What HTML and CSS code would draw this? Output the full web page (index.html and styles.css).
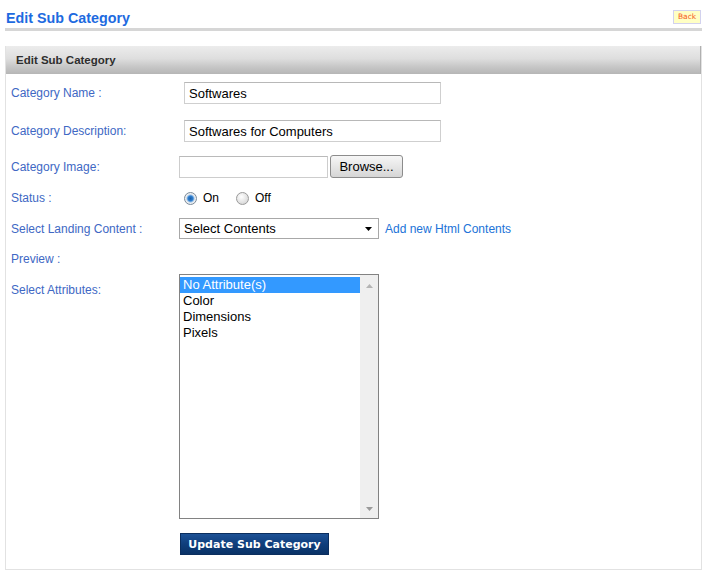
FILE: index.html
```html
<!DOCTYPE html>
<html>
<head>
<meta charset="utf-8">
<link rel="stylesheet" href="styles.css">
</head>
<body>
<div class="page">
  <div class="topbar">
    <h1 class="title">Edit Sub Category</h1>
    <a class="back" href="#">Back</a>
  </div>
  <div class="rule"></div>
  <div class="panel">
    <div class="panel-head">Edit Sub Category</div>
    <div class="form">
      <div class="row row-name">
        <label class="lbl">Category Name :</label>
        <div class="field"><input class="text" type="text" value="Softwares"></div>
      </div>
      <div class="row row-desc">
        <label class="lbl">Category Description:</label>
        <div class="field"><input class="text" type="text" value="Softwares for Computers"></div>
      </div>
      <div class="row row-image">
        <label class="lbl">Category Image:</label>
        <div class="field file">
          <div class="file-box"></div>
          <button class="browse" type="button">Browse...</button>
        </div>
      </div>
      <div class="row row-status">
        <label class="lbl">Status :</label>
        <div class="field radios">
          <span class="radio checked"></span><span class="rtext rtext-on">On</span>
          <span class="radio off"></span><span class="rtext">Off</span>
        </div>
      </div>
      <div class="row row-landing">
        <label class="lbl">Select Landing Content :</label>
        <div class="field landing">
          <div class="select">
            <span>Select Contents</span>
            <svg class="arrow" width="8" height="4" viewBox="0 0 8 4"><path d="M0 0H7L3.5 4Z" fill="#000"/></svg>
          </div>
          <a class="add-link" href="#">Add new Html Contents</a>
        </div>
      </div>
      <div class="row row-preview">
        <label class="lbl">Preview :</label>
        <div class="field"></div>
      </div>
      <div class="row row-attrs">
        <label class="lbl">Select Attributes:</label>
        <div class="field">
          <div class="listbox">
            <ul class="options">
              <li class="opt selected">No Attribute(s)</li>
              <li class="opt">Color</li>
              <li class="opt">Dimensions</li>
              <li class="opt">Pixels</li>
            </ul>
            <div class="scrollbar">
              <svg width="7" height="4" viewBox="0 0 7 4"><path d="M0 4L3.5 0L7 4Z" fill="#b4b4b4"/></svg>
              <svg width="7" height="4" viewBox="0 0 7 4"><path d="M0 0L3.5 4L7 0Z" fill="#9a9a9a"/></svg>
            </div>
          </div>
        </div>
      </div>
      <div class="row row-submit">
        <span class="lbl"></span>
        <div class="field"><button class="update" type="button">Update Sub Category</button></div>
      </div>
    </div>
  </div>
</div>
</body>
</html>
```

FILE: styles.css
```css
* { box-sizing: border-box; }
html, body { margin: 0; padding: 0; background: #fff; }
body { font-family: "Liberation Sans", Arial, sans-serif; font-size: 12px; color: #000; }

.page { padding: 0 3px 0 5px; }

.topbar {
  display: flex;
  justify-content: space-between;
  align-items: flex-start;
  height: 20px;
  margin-top: 8px;
  padding-left: 1px;
}
.title {
  margin: 0;
  font-family: "Liberation Sans", Arial, sans-serif;
  font-weight: bold;
  font-size: 14.3px;
  line-height: 20px;
  color: #1d6ae0;
}
.back {
  margin-top: 2px;
  margin-right: 1px;
  width: 28px;
  height: 14px;
  background: #ffffc4;
  border: 1px solid #d2d2ee;
  color: #f55a1e;
  font-family: "DejaVu Sans", Verdana, sans-serif;
  font-size: 7.5px;
  line-height: 12px;
  text-align: center;
  text-decoration: none;
}
.rule { height: 3px; background: #d6d6d6; }

.panel {
  margin-top: 15px;
  border: 1px solid #e2e2e2;
  border-top: none;
}
.panel-head {
  height: 28px;
  padding-left: 10px;
  background: linear-gradient(#ececec 0%, #dedede 45%, #c6c6c6 75%, #b6b6b6 100%);
  border-right: 1px solid #b0b0b0;
  font-weight: bold;
  font-size: 11.5px;
  line-height: 29px;
  color: #2e2e2e;
}

.form { padding: 8px 0 14px 5px; display: flex; flex-direction: column; }
.row { display: grid; grid-template-columns: 168px 1fr; align-items: center; }
.lbl { color: #4068c4; font-size: 12px; line-height: 14px; }
.field { display: flex; align-items: center; }

.row-desc { margin-top: 16px; }
.row-image { margin-top: 13px; }
.row-status { margin-top: 13px; height: 14px; }
.row-landing { margin-top: 13px; }
.row-preview { margin-top: 13px; height: 14px; }
.row-attrs { margin-top: 8px; align-items: start; }
.row-attrs .lbl { padding-top: 9px; }
.row-submit { margin-top: 14px; }

.text {
  margin: 0 0 0 5px;
  width: 257px;
  height: 22px;
  padding: 0 4px;
  border: 1px solid #cfcfcf;
  border-top-color: #b8b8b8;
  font-family: "Liberation Sans", Arial, sans-serif;
  font-size: 13px;
  color: #000;
  outline: none;
}

.file { gap: 2px; }
.file-box {
  width: 149px;
  height: 22px;
  border: 1px solid #cdcdcd;
  border-top-color: #bababa;
}
.browse {
  margin: 0;
  width: 73px;
  height: 23px;
  padding: 0;
  border: 1px solid #8c8c8c;
  border-radius: 3px;
  background: linear-gradient(#f6f6f6, #e6e6e6 50%, #d6d6d6);
  font-family: "Liberation Sans", Arial, sans-serif;
  font-size: 13px;
  color: #000;
}

.radios { padding-left: 5px; }
.radio {
  width: 13px;
  height: 13px;
  border-radius: 50%;
  border: 1px solid #9a9a9a;
  background: radial-gradient(circle at 40% 35%, #ffffff, #dcdcdc 70%, #c8c8c8);
}
.radio.checked {
  border-color: #7a8a9a;
  background: radial-gradient(circle at 50% 50%, #1b5fa8 0, #2f7fd0 2.5px, #9fc4e8 3.6px, #f2f2f2 4.6px, #d8d8d8 100%);
}
.rtext { margin-left: 6px; font-size: 12px; color: #000; }
.rtext-on { margin-right: 17px; }

.landing { gap: 6px; }
.select {
  width: 200px;
  height: 21px;
  border: 1px solid #a8a8a8;
  display: flex;
  align-items: center;
  justify-content: space-between;
  padding: 0 5px 0 4px;
  font-size: 13px;
  color: #000;
}
.arrow { display: block; }
.add-link { color: #2173d8; text-decoration: none; font-size: 12px; }

.listbox {
  width: 200px;
  height: 245px;
  border: 1px solid #828282;
  display: flex;
}
.options {
  list-style: none;
  margin: 0;
  padding: 2px 0 0 0;
  flex: 1;
}
.opt {
  height: 16px;
  line-height: 16px;
  padding-left: 3px;
  font-size: 13px;
  color: #000;
}
.opt.selected { background: #3399ff; color: #fff; }
.scrollbar {
  width: 18px;
  background: #efefef;
  display: flex;
  flex-direction: column;
  justify-content: space-between;
  align-items: center;
  padding: 9px 0 7px;
}
.scrollbar svg { display: block; }

.update {
  margin: 0 0 0 1px;
  width: 149px;
  height: 22px;
  padding: 0;
  border: 1px solid #0b2e5e;
  background: linear-gradient(#1d5296, #0f3e7c 50%, #0a3266);
  color: #fff;
  font-family: "DejaVu Sans", Verdana, sans-serif;
  font-weight: bold;
  font-size: 11px;
}
```
